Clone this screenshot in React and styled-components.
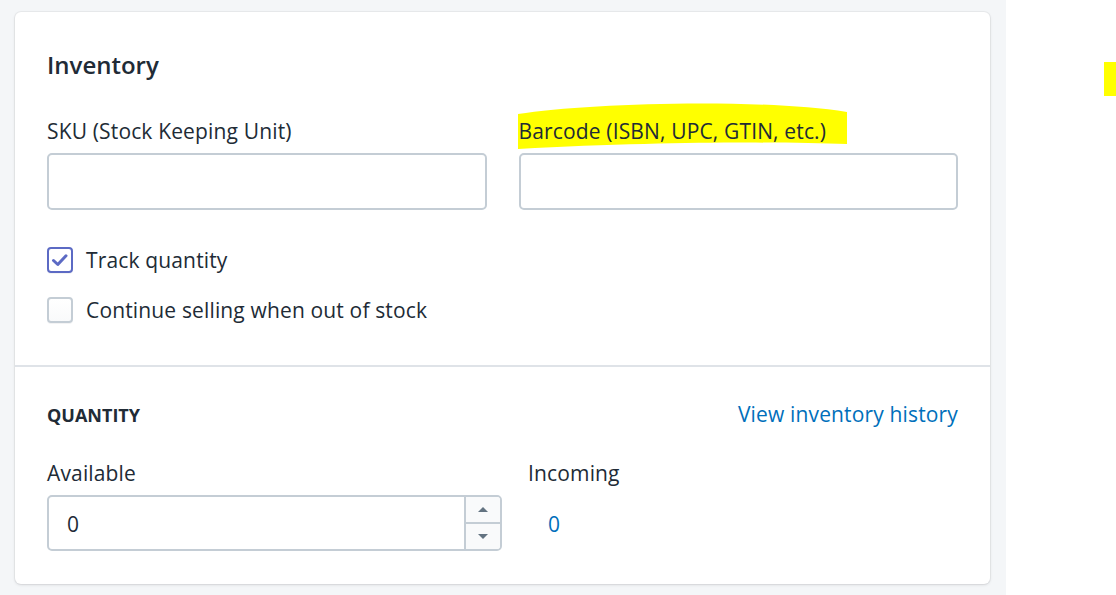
import React from "react";
import styled, { createGlobalStyle } from "styled-components";

const GlobalStyle = createGlobalStyle`
  html, body {
    margin: 0;
    padding: 0;
    background: #ffffff;
  }
  body {
    font-family: "Open Sans", "Noto Sans", "Liberation Sans", sans-serif;
    color: #212b36;
    letter-spacing: 0.15px;
    -webkit-font-smoothing: antialiased;
  }
  * {
    box-sizing: border-box;
  }
`;

const Page = styled.div`
  display: flex;
  width: 1116px;
  height: 595px;
  overflow: hidden;
`;

const Canvas = styled.div`
  width: 1006px;
  flex-shrink: 0;
  background: #f4f6f8;
  padding: 12px 16px 0 15px;
`;

const Aside = styled.div`
  flex: 1;
  background: #ffffff;
  padding: 62px 0 0 98px;
`;

const Marker = styled.div`
  width: 12px;
  height: 34px;
  background: #ffff00;
`;

const Card = styled.div`
  background: #ffffff;
  border-radius: 6px;
  box-shadow: 0 0 0 1px rgba(63, 63, 68, 0.05),
    0 1px 3px 0 rgba(63, 63, 68, 0.15);
`;

const Section = styled.div`
  padding: ${(p) => p.$pad};
  border-top: ${(p) => (p.$divided ? "2px solid #dfe3e8" : "none")};
`;

const Heading = styled.h2`
  margin: 0 0 32px;
  font-size: 24px;
  line-height: 36px;
  font-weight: 600;
  letter-spacing: 0;
`;

const FieldRow = styled.div`
  display: grid;
  grid-template-columns: ${(p) => p.$cols};
  column-gap: ${(p) => p.$gap};
`;

const Field = styled.div`
  display: flex;
  flex-direction: column;
`;

const Label = styled.label`
  position: relative;
  display: block;
  font-size: 21px;
  line-height: 30px;
  padding-top: 1px;
  margin-bottom: 7px;
  white-space: nowrap;
`;

const LabelText = styled.span`
  position: relative;
  z-index: 1;
`;

const Highlight = styled.svg`
  position: absolute;
  left: -1px;
  top: -14px;
  z-index: 0;
`;

const InputBox = styled.div`
  display: flex;
  height: ${(p) => p.$h};
  border: 2px solid #c4cdd5;
  border-radius: 5px;
  background: #ffffff;
  overflow: hidden;
`;

const InputText = styled.div`
  flex: 1;
  display: flex;
  align-items: center;
  padding: 2px 0 0 18px;
  font-size: 21px;
`;

const Spinner = styled.div`
  width: 36px;
  display: flex;
  flex-direction: column;
  border-left: 2px solid #c4cdd5;
  background: #f9fafb;
`;

const SpinButton = styled.div`
  flex: 1;
  display: flex;
  align-items: center;
  justify-content: center;
  & + & {
    border-top: 2px solid #c4cdd5;
  }
`;

const Arrow = styled.span`
  width: 0;
  height: 0;
  border-left: 5px solid transparent;
  border-right: 5px solid transparent;
  ${(p) =>
    p.$up
      ? "border-bottom: 5px solid #637381;"
      : "border-top: 5px solid #637381;"}
`;

const Checks = styled.div`
  display: flex;
  flex-direction: column;
  gap: 20px;
  margin-top: 34px;
`;

const CheckRow = styled.label`
  display: flex;
  align-items: center;
  gap: 13px;
  height: 30px;
  font-size: 21px;
  padding-top: 1px;
`;

const Box = styled.span`
  width: 26px;
  height: 26px;
  flex-shrink: 0;
  border-radius: 4px;
  display: flex;
  align-items: center;
  justify-content: center;
  border: 2px solid ${(p) => (p.$checked ? "#5c6ac4" : "#c4cdd5")};
  background: ${(p) =>
    p.$checked ? "#ffffff" : "linear-gradient(180deg, #ffffff, #f9fafb)"};
  box-shadow: 0 1px 0 0 rgba(22, 29, 37, 0.05);
`;

const SubHeader = styled.div`
  display: flex;
  justify-content: space-between;
  align-items: baseline;
  height: 30px;
  margin-bottom: 28px;
`;

const Subheading = styled.h3`
  margin: 0;
  font-size: 18px;
  font-weight: 700;
  text-transform: uppercase;
  line-height: 30px;
  letter-spacing: 0;
`;

const Link = styled.a`
  font-size: 21px;
  line-height: 30px;
  color: #006fbb;
  text-decoration: none;
`;

const Value = styled.div`
  height: 56px;
  display: flex;
  align-items: center;
  padding: 2px 0 0 20px;
  font-size: 21px;
  color: #006fbb;
`;

const Checkbox = ({ checked, children }) => (
  <CheckRow>
    <Box $checked={checked}>
      {checked && (
        <svg width="18" height="18" viewBox="0 0 18 18">
          <path
            d="M2.5 9.5 L6.8 13.5 L15 4.8"
            fill="none"
            stroke="#5c6ac4"
            strokeWidth="3"
            strokeLinecap="round"
            strokeLinejoin="round"
          />
        </svg>
      )}
    </Box>
    {children}
  </CheckRow>
);

export default function App() {
  return (
    <Page>
      <GlobalStyle />
      <Canvas>
        <Card>
          <Section $pad="35px 32px 41px">
            <Heading>Inventory</Heading>
            <FieldRow $cols="1fr 1fr" $gap="32px">
              <Field>
                <Label>SKU (Stock Keeping Unit)</Label>
                <InputBox $h="57px" />
              </Field>
              <Field>
                <Label>
                  <Highlight width="330" height="50" viewBox="0 0 330 50">
                    <path
                      d="M0 13 C 70 2, 240 -3, 329 11 L 329 43 C 260 41, 150 40, 0 48 Z"
                      fill="#ffff00"
                    />
                  </Highlight>
                  <LabelText>Barcode (ISBN, UPC, GTIN, etc.)</LabelText>
                </Label>
                <InputBox $h="57px" />
              </Field>
            </FieldRow>
            <Checks>
              <Checkbox checked>Track quantity</Checkbox>
              <Checkbox>Continue selling when out of stock</Checkbox>
            </Checks>
          </Section>
          <Section $divided $pad="32px 32px 33px">
            <SubHeader>
              <Subheading>Quantity</Subheading>
              <Link href="#">View inventory history</Link>
            </SubHeader>
            <FieldRow $cols="455px 1fr" $gap="26px">
              <Field>
                <Label>Available</Label>
                <InputBox $h="56px">
                  <InputText>0</InputText>
                  <Spinner>
                    <SpinButton>
                      <Arrow $up />
                    </SpinButton>
                    <SpinButton>
                      <Arrow />
                    </SpinButton>
                  </Spinner>
                </InputBox>
              </Field>
              <Field>
                <Label>Incoming</Label>
                <Value>0</Value>
              </Field>
            </FieldRow>
          </Section>
        </Card>
      </Canvas>
      <Aside>
        <Marker />
      </Aside>
    </Page>
  );
}
